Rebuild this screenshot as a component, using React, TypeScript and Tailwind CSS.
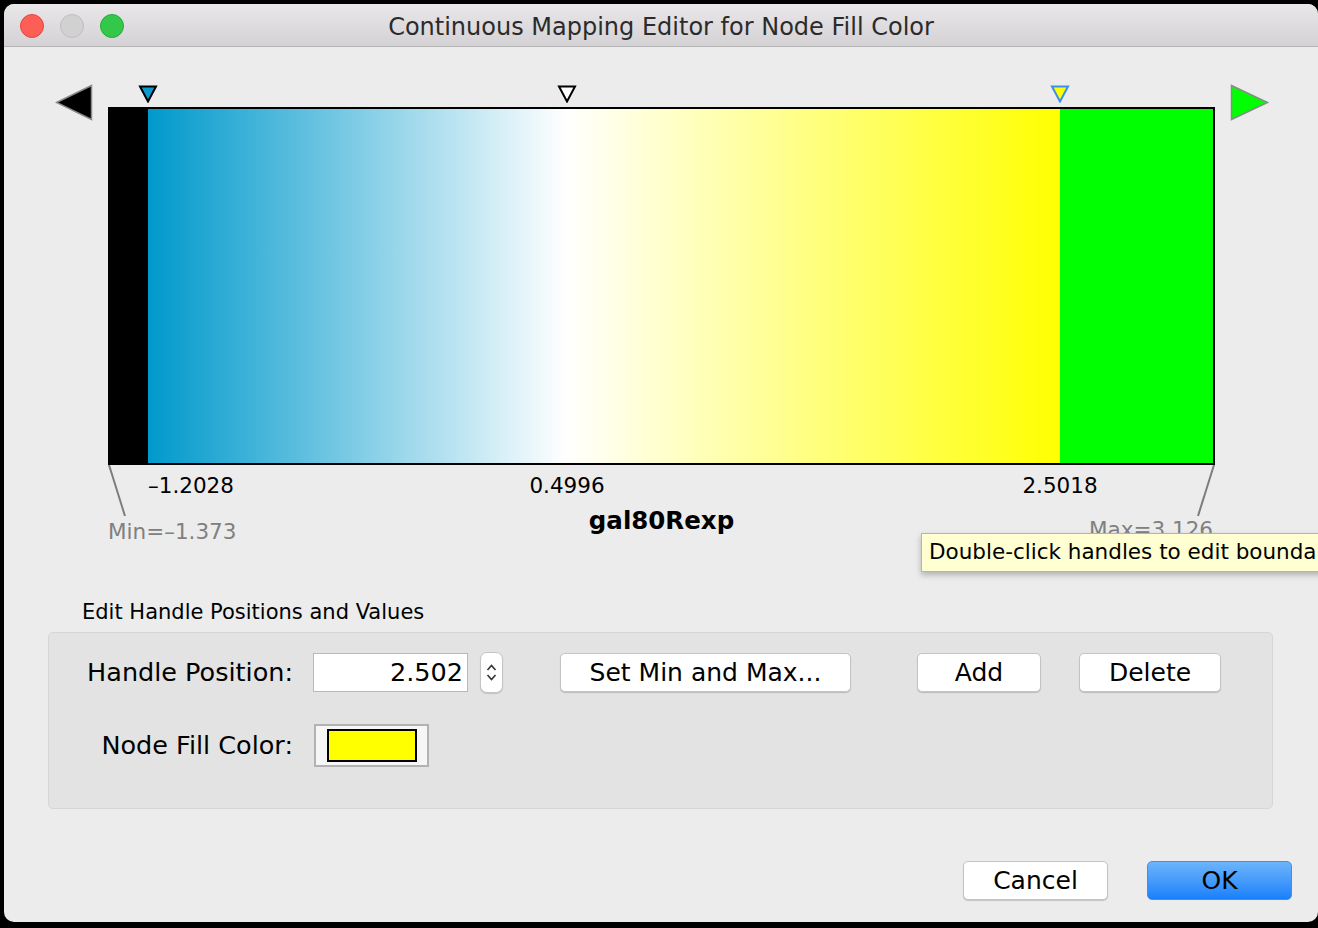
import React from "react";

const FONT = { fontFamily: '"DejaVu Sans", "Liberation Sans", sans-serif' };

function Handle({ left, fill, stroke }: { left: number; fill: string; stroke: string }) {
  return (
    <svg
      className="absolute top-[1px]"
      style={{ left: left - 10 }}
      width="20"
      height="18"
      viewBox="0 0 20 18"
    >
      <polygon points="2,1.5 18,1.5 10,16.5" fill={fill} stroke={stroke} strokeWidth="2" strokeLinejoin="miter" />
    </svg>
  );
}

function MacButton({ children, className = "" }: { children: React.ReactNode; className?: string }) {
  return (
    <button
      className={`flex items-center justify-center rounded-[5px] border border-[#c4c4c4] bg-white text-[25px] text-black shadow-[0_1px_1px_rgba(0,0,0,0.18)] ${className}`}
    >
      {children}
    </button>
  );
}

export default function App() {
  return (
    <div className="h-[928px] w-[1318px] overflow-hidden bg-black pl-[4px] pt-[4px]" style={FONT}>
      <div className="relative flex h-[918px] w-[1314px] flex-col overflow-hidden rounded-[10px] bg-[#ececec]">
        {/* title bar */}
        <div className="relative flex h-[43px] shrink-0 items-center border-b border-[#b3b3b3] bg-gradient-to-b from-[#e9e7e9] to-[#d4d2d4]">
          <div className="flex items-center gap-[16px] pl-[16px] pt-[1px]">
            <span className="h-[24px] w-[24px] rounded-full border border-[#e2463f] bg-[#fd5f57]" />
            <span className="h-[24px] w-[24px] rounded-full border border-[#bdbdbd] bg-[#d1d1d1]" />
            <span className="h-[24px] w-[24px] rounded-full border border-[#27a93a] bg-[#34c84a]" />
          </div>
          <div className="absolute inset-x-0 top-[8px] text-center text-[24px] leading-[30px] text-[#2b2b2b]">
            Continuous Mapping Editor for Node Fill Color
          </div>
        </div>

        {/* gradient editor */}
        <div className="flex items-start pl-[51px] pt-[37px]">
          <svg width="38" height="38" viewBox="0 0 38 38" className="shrink-0">
            <polygon points="1.5,18.5 36.5,1.5 36.5,35.5" fill="#000" stroke="#8a8a8a" strokeWidth="1.5" />
          </svg>
          <div className="relative ml-[15px] w-[1107px]">
            <div className="relative h-[23px]">
              <Handle left={40} fill="#0a9ad0" stroke="#000" />
              <Handle left={459} fill="#ffffff" stroke="#000" />
              <Handle left={952} fill="#ffff00" stroke="#3a8ff0" />
            </div>
            <div className="flex h-[358px] border-2 border-black">
              <div className="w-[38px] bg-black" />
              <div className="flex-1 bg-[linear-gradient(to_right,#0099cc_0%,#ffffff_45.9%,#ffff00_100%)]" />
              <div className="w-[153px] bg-[#00ff00]" />
            </div>
            <div className="relative h-[80px] text-[21.5px] leading-[26px]">
              <svg className="absolute left-0 top-0" width="1107" height="60">
                <line x1="1" y1="0" x2="17" y2="51" stroke="#7d7d7d" strokeWidth="2" />
                <line x1="1106" y1="0" x2="1090" y2="51" stroke="#7d7d7d" strokeWidth="2" />
              </svg>
              <span className="absolute left-[40px] top-[8px] text-black">–1.2028</span>
              <span className="absolute left-[459px] top-[8px] -translate-x-1/2 text-black">0.4996</span>
              <span className="absolute left-[952px] top-[8px] -translate-x-1/2 text-black">2.5018</span>
              <span className="absolute left-0 top-[54px] text-[#808080]">Min=–1.373</span>
              <span className="absolute right-[2px] top-[52px] text-[#808080]">Max=3.126</span>
              <span className="absolute left-1/2 top-[41px] -translate-x-1/2 text-[24.5px] font-bold leading-[30px] text-black">
                gal80Rexp
              </span>
            </div>
          </div>
          <svg width="40" height="38" viewBox="0 0 40 38" className="ml-[15px] shrink-0">
            <polygon points="1.5,1.5 37.5,18.5 1.5,35.5" fill="#00ff00" stroke="#8a8a8a" strokeWidth="1.5" />
          </svg>
        </div>

        {/* handle values */}
        <div className="mt-[54px] pl-[78px] text-[21px] leading-[26px] text-black">Edit Handle Positions and Values</div>
        <div className="ml-[44px] mt-[7px] flex h-[177px] w-[1225px] flex-col gap-[31px] rounded-[5px] border border-[#d6d6d6] bg-[#e3e3e3] pt-[19px] text-[25.5px] text-black">
          <div className="flex h-[41px] items-center">
            <div className="w-[244px] text-right">Handle Position:</div>
            <div className="ml-[20px] flex h-[39px] w-[155px] items-center justify-end border border-[#b9b9b9] bg-white pr-[4px]">
              2.502
            </div>
            <div className="ml-[12px] flex h-[41px] w-[23px] flex-col items-center justify-center gap-[3px] rounded-[7px] border border-[#c4c4c4] bg-white shadow-[0_1px_1px_rgba(0,0,0,0.15)]">
              <svg width="11" height="7" viewBox="0 0 11 7">
                <polyline points="1.5,6 5.5,1.5 9.5,6" fill="none" stroke="#333" strokeWidth="1.6" />
              </svg>
              <svg width="11" height="7" viewBox="0 0 11 7">
                <polyline points="1.5,1 5.5,5.5 9.5,1" fill="none" stroke="#333" strokeWidth="1.6" />
              </svg>
            </div>
            <MacButton className="ml-[57px] h-[39px] w-[291px]">Set Min and Max...</MacButton>
            <MacButton className="ml-[66px] h-[39px] w-[124px] border-[#5f9ee9] shadow-[0_0_0_1.5px_#9fc4f2]">Add</MacButton>
            <MacButton className="ml-[38px] h-[39px] w-[142px]">Delete</MacButton>
          </div>
          <div className="flex h-[43px] items-center">
            <div className="w-[244px] text-right">Node Fill Color:</div>
            <div className="ml-[21px] flex h-[43px] w-[115px] items-center justify-center border-2 border-[#b2b2b2] bg-[#f6f6f6]">
              <div className="h-[33px] w-[90px] border-2 border-black bg-[#ffff00]" />
            </div>
          </div>
        </div>

        {/* dialog buttons */}
        <div className="mt-[52px] flex justify-end gap-[39px] pr-[26px]">
          <MacButton className="h-[39px] w-[145px]">Cancel</MacButton>
          <button className="flex h-[39px] w-[145px] items-center justify-center rounded-[5px] border border-[#3d8ff0] bg-gradient-to-b from-[#6cb4fb] to-[#1580fb] text-[25px] text-black">
            OK
          </button>
        </div>

        {/* tooltip, runs past the window edge */}
        <div className="absolute left-[917px] top-[529px] flex h-[39px] w-[460px] items-center whitespace-nowrap border border-[#b7b7a0] bg-[#ffffd2] pl-[7px] text-[21.5px] text-black shadow-[0_3px_6px_rgba(0,0,0,0.25)]">
          Double-click handles to edit boundaries.
        </div>
      </div>
    </div>
  );
}
